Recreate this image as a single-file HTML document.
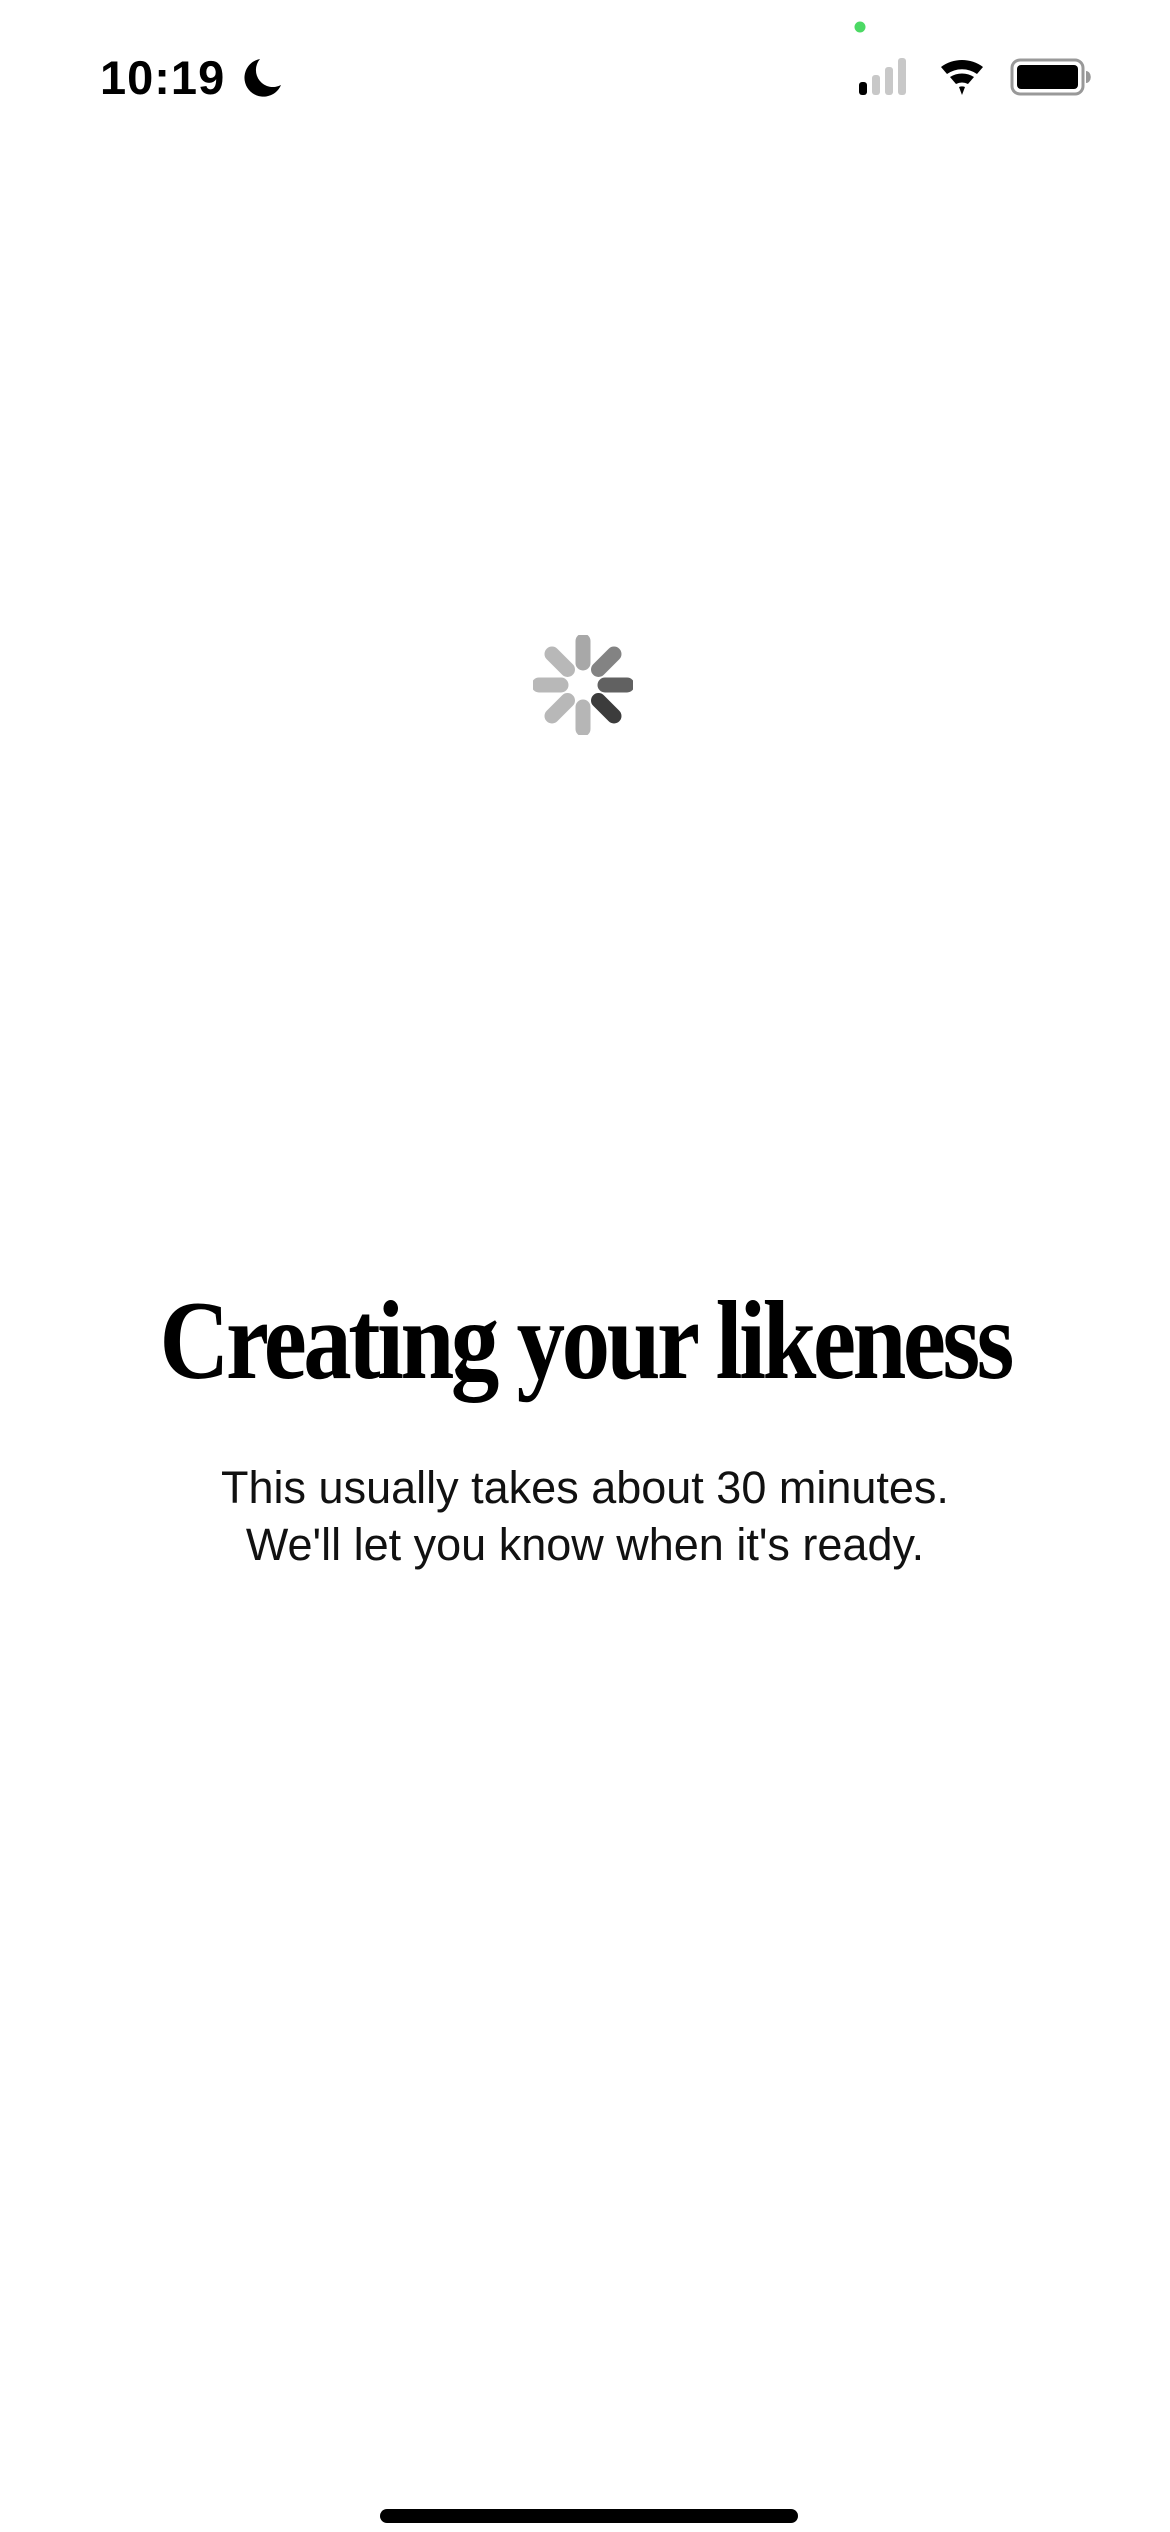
<!DOCTYPE html>
<html><head><meta charset="utf-8"><style>
html,body{margin:0;padding:0;background:#fff;}
body{width:1170px;height:2532px;position:relative;overflow:hidden;}
.time{position:absolute;left:100px;top:50px;font:600 47px "Liberation Sans",sans-serif;letter-spacing:1px;color:#000;}
h1{position:absolute;left:0;width:1170px;top:1277px;margin:0;text-align:center;font:bold 112px "Liberation Serif",serif;letter-spacing:-4px;color:#000;}
h1 span{display:inline-block;transform:scaleX(0.865);white-space:nowrap;}
.sub{position:absolute;left:0;width:1170px;top:1459px;text-align:center;font:45px/57px "Liberation Sans",sans-serif;color:#111;}
.home{position:absolute;left:380px;top:2509px;width:418px;height:14px;border-radius:7px;background:#000;}
</style></head><body>
<div class="time">10:19</div>
<svg style="position:absolute;left:240px;top:57px" width="44" height="44" viewBox="0 0 44 44"><path d="M20 2 A19 19 0 1 0 41 28 A17 17 0 0 1 20 2Z" fill="#000"/></svg>
<svg style="position:absolute;left:850px;top:15px" width="260" height="90" viewBox="0 0 260 90">
<circle cx="10" cy="12" r="5.5" fill="#4cd964"/>
<rect x="9" y="67" width="8" height="13" rx="3" fill="#000"/>
<rect x="22" y="60" width="8" height="20" rx="3" fill="#c8c8c8"/>
<rect x="35" y="52" width="8" height="28" rx="3" fill="#c8c8c8"/>
<rect x="48" y="43" width="8" height="37" rx="3" fill="#c8c8c8"/>
<g transform="translate(23,0)">
<path d="M68 52 A35 35 0 0 1 110 52 L104 59 A26 26 0 0 0 74 59Z" fill="#000"/>
<path d="M77 62 A22 22 0 0 1 101 62 L95 69 A13 13 0 0 0 83 69Z" fill="#000"/>
<path d="M86 72 A8 8 0 0 1 92 72 L89 80Z" fill="#000"/>
</g>
<rect x="162" y="45" width="71" height="34" rx="8" fill="none" stroke="#999" stroke-width="3"/>
<rect x="167" y="50" width="61" height="24" rx="4" fill="#000"/>
<path d="M236 56 a4 5 0 0 1 0 12z" fill="#999"/>
</svg>
<svg style="position:absolute;left:533px;top:635px" width="100" height="100" viewBox="-50 -50 100 100">
<g stroke-width="15" stroke-linecap="round">
<line x1="0" y1="-22" x2="0" y2="-44" stroke="#a8a8a8"/>
<line x1="15.5" y1="-15.5" x2="31" y2="-31" stroke="#838383"/>
<line x1="22" y1="0" x2="44" y2="0" stroke="#616161"/>
<line x1="15.5" y1="15.5" x2="31" y2="31" stroke="#3c3c3c"/>
<line x1="0" y1="22" x2="0" y2="44" stroke="#b6b6b6"/>
<line x1="-15.5" y1="15.5" x2="-31" y2="31" stroke="#b8b8b8"/>
<line x1="-22" y1="0" x2="-44" y2="0" stroke="#b8b8b8"/>
<line x1="-15.5" y1="-15.5" x2="-31" y2="-31" stroke="#b8b8b8"/>
</g></svg>
<h1><span>Creating your likeness</span></h1>
<div class="sub">This usually takes about 30 minutes.<br>We'll let you know when it's ready.</div>
<div class="home"></div>
</body></html>
